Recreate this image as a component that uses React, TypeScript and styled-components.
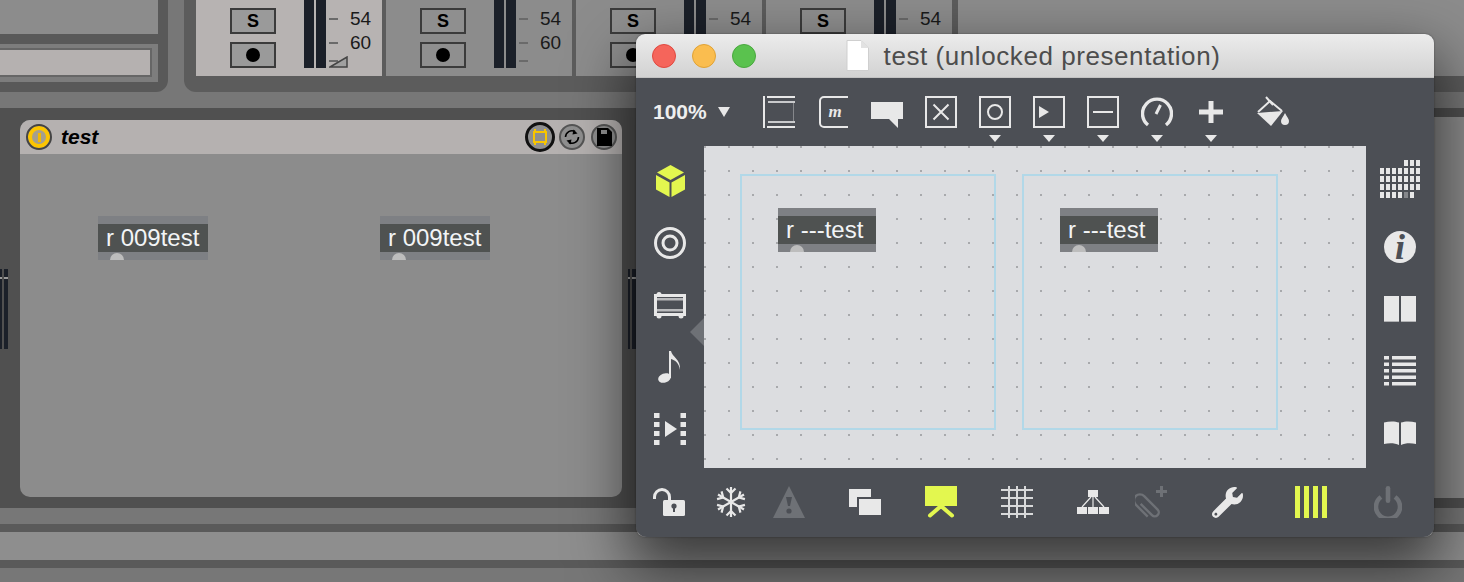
import React from "react";
import styled, { createGlobalStyle } from "styled-components";
import { FaWrench } from "react-icons/fa";

const ICON = "#e8e8e8";
const LIME = "#e3f74f";
const DIM = "#6e7176";
const CHROME = "#4c4f55";

const GlobalStyle = createGlobalStyle`
  html, body {
    margin: 0;
    padding: 0;
    background: #777;
    font-family: "Liberation Sans", Arial, sans-serif;
    overflow: hidden;
  }
`;

const Page = styled.div`
  position: relative;
  width: 1464px;
  height: 582px;
  overflow: hidden;
  background: #777;
`;

/* ---- Live set behind the patcher ---- */

const TopArea = styled.div`
  display: flex;
  height: 92px;
  margin-bottom: 16px;
`;
const BrowserPanel = styled.div`
  width: 168px;
  margin-right: 16px;
  flex: none;
  background: #595959;
  border-bottom-right-radius: 12px;
`;
const BrowserTop = styled.div`
  width: 158px;
  height: 34px;
  margin-bottom: 10px;
  background: #8c8c8c;
`;
const FieldWell = styled.div`
  width: 158px;
  height: 38px;
  box-sizing: border-box;
  padding: 4px 6px 5px 0;
  background: #7d7d7d;
`;
const Field = styled.div`
  height: 100%;
  box-sizing: border-box;
  background: #b5b1b0;
  border: 2px solid #666;
  border-left: 0;
`;
const StripPanel = styled.div`
  flex: 1;
  display: flex;
  gap: 4px;
  height: 76px;
  padding: 0 0 16px 12px;
  background: #5c5c5c;
  border-bottom-left-radius: 12px;
`;
const Strip = styled.div<{ $active?: boolean }>`
  width: 186px;
  height: 76px;
  flex: none;
  display: flex;
  background: ${(p) => (p.$active ? "#b7b3b2" : "#8c8c8c")};
`;
const StripFiller = styled.div`
  flex: 1;
  margin-left: 2px;
  background: #8c8c8c;
`;
const ButtonColumn = styled.div`
  width: 46px;
  margin: 8px 0 0 34px;
  display: flex;
  flex-direction: column;
  gap: 8px;
`;
const StripButton = styled.div<{ $active?: boolean }>`
  height: 26px;
  box-sizing: border-box;
  display: flex;
  align-items: center;
  justify-content: center;
  border: 2px solid #3b3b3b;
  background: ${(p) => (p.$active ? "#9a9a9a" : "#8f8f8f")};
  color: #000;
  font-size: 18px;
  font-weight: 700;
`;
const RecDot = styled.div`
  width: 14px;
  height: 14px;
  border-radius: 50%;
  background: #000;
`;
const StripMeter = styled.div`
  display: flex;
  gap: 2px;
  height: 68px;
  margin-left: 28px;
`;
const StripMeterBar = styled.div`
  width: 10px;
  background: #1b2029;
`;
const Scale = styled.div`
  position: relative;
  margin-left: 3px;
  padding-top: 7px;
`;
const ScaleRow = styled.div<{ $height: number }>`
  display: flex;
  align-items: center;
  height: ${(p) => p.$height}px;
`;
const Tick = styled.div`
  width: 9px;
  height: 2px;
  background: #6a6a6a;
`;
const ScaleLabel = styled.div`
  margin-left: 12px;
  font-size: 19px;
  color: #1a1a1a;
`;
const FaderMark = styled.svg`
  position: absolute;
  left: 0;
  top: 56px;
`;

const Rack = styled.div`
  display: flex;
  height: 400px;
  box-sizing: border-box;
  padding: 12px 0 11px;
  background: #505050;
`;
const Gutter = styled.div<{ $width: number; $end?: boolean }>`
  width: ${(p) => p.$width}px;
  flex: none;
  display: flex;
  align-items: center;
  justify-content: ${(p) => (p.$end ? "flex-end" : "flex-start")};
`;
const SideMeter = styled.div`
  display: flex;
  gap: 2px;
  height: 80px;
`;
const SideMeterBar = styled.div<{ $width: number }>`
  width: ${(p) => p.$width}px;
  background: linear-gradient(#1b2029 8px, #9a9a9a 8px, #9a9a9a 10px, #1b2029 10px);
`;
const Device = styled.div`
  position: relative;
  width: 602px;
  flex: none;
  display: flex;
  flex-direction: column;
  overflow: hidden;
  background: #8c8c8c;
  border-radius: 10px;
`;
const NextDevice = styled.div`
  flex: 1;
  margin: -3px 0 -1px;
  background: #8c8c8c;
`;
const DeviceHeader = styled.div`
  height: 34px;
  flex: none;
  display: flex;
  align-items: center;
  box-sizing: border-box;
  padding: 0 5px 0 6px;
  background: #b5b1b0;
`;
const DeviceName = styled.div`
  margin-left: 9px;
  flex: 1;
  font-size: 21px;
  font-weight: 700;
  font-style: italic;
  color: #000;
`;
const RoundButton = styled.div<{ $size: number; $ring: string; $gap?: number }>`
  width: ${(p) => p.$size}px;
  height: ${(p) => p.$size}px;
  margin-left: ${(p) => p.$gap ?? 0}px;
  flex: none;
  display: flex;
  align-items: center;
  justify-content: center;
  box-sizing: border-box;
  border: ${(p) => (p.$size > 28 ? 3 : 2)}px solid ${(p) => p.$ring};
  border-radius: 50%;
  background: #8f8f8f;
`;
const DevicePower = styled.div`
  width: 26px;
  height: 26px;
  flex: none;
  box-sizing: border-box;
  display: flex;
  align-items: center;
  justify-content: center;
  border: 2px solid #444;
  border-radius: 50%;
  background: #a59f8c;
  box-shadow: inset 0 0 0 4px #fcc500;
`;
const PowerBar = styled.div`
  width: 3px;
  height: 9px;
  background: #f3b900;
`;
const PatchObject = styled.div<{ $x: number; $y: number; $width: number }>`
  position: absolute;
  left: ${(p) => p.$x}px;
  top: ${(p) => p.$y}px;
  width: ${(p) => p.$width}px;
  height: 44px;
  box-sizing: border-box;
  padding-top: 8px;
  background: #7e8084;
  overflow: hidden;
`;
const PatchBody = styled.div`
  height: 28px;
  box-sizing: border-box;
  padding-left: 8px;
  background: #4f5251;
  color: #f2f4f6;
  font-size: 24px;
  line-height: 28px;
  white-space: nowrap;
`;
const Outlet = styled.div`
  position: absolute;
  left: 12px;
  top: 37px;
  width: 14px;
  height: 14px;
  border-radius: 50%;
  background: #bdbdbd;
`;

const Band = styled.div<{ $height: number; $color: string }>`
  height: ${(p) => p.$height}px;
  background: ${(p) => p.$color};
`;

/* ---- Patcher window ---- */

const PatcherWindow = styled.div`
  position: absolute;
  left: 636px;
  top: 34px;
  width: 798px;
  height: 503px;
  display: flex;
  flex-direction: column;
  overflow: hidden;
  background: ${CHROME};
  border-radius: 9px 9px 11px 11px;
`;
const WindowShadow = styled.div`
  position: absolute;
  left: 636px;
  top: 34px;
  width: 798px;
  height: 503px;
  border-radius: 9px;
  box-shadow: 0 26px 60px 6px rgba(0, 0, 0, 0.6), 0 0 2px rgba(0, 0, 0, 0.4);
`;
const TitleBar = styled.div`
  height: 44px;
  flex: none;
  display: grid;
  grid-template-columns: 1fr auto 1fr;
  align-items: center;
  box-sizing: border-box;
  padding: 0 20px 0 16px;
  background: linear-gradient(#ececec, #d2d2d2);
  border-bottom: 1px solid #c2c2c2;
`;
const Lights = styled.div`
  display: flex;
  gap: 16px;
`;
const Light = styled.div<{ $fill: string; $edge: string }>`
  width: 24px;
  height: 24px;
  box-sizing: border-box;
  border-radius: 50%;
  background: ${(p) => p.$fill};
  border: 1px solid ${(p) => p.$edge};
`;
const TitleGroup = styled.div`
  display: flex;
  align-items: center;
  gap: 15px;
`;
const TitleText = styled.div`
  padding-top: 2px;
  font-size: 26px;
  letter-spacing: 0.57px;
  color: #4d4d4d;
  white-space: nowrap;
`;
const Toolbar = styled.div`
  height: 68px;
  flex: none;
  display: flex;
  align-items: flex-start;
  box-sizing: border-box;
  padding: 18px 0 0 17px;
`;
const Zoom = styled.div`
  width: 54px;
  height: 32px;
  font-size: 21px;
  font-weight: 700;
  line-height: 32px;
  color: #eee;
  white-space: nowrap;
`;
const ZoomCaret = styled.div`
  width: 0;
  height: 0;
  margin: 11px 33px 0 11px;
  border-left: 6px solid transparent;
  border-right: 6px solid transparent;
  border-top: 10px solid ${ICON};
`;
const ToolButton = styled.div<{ $gap?: number }>`
  width: 32px;
  flex: none;
  margin-left: ${(p) => p.$gap ?? 22}px;
  display: flex;
  flex-direction: column;
  align-items: center;
`;
const ToolCaret = styled.div`
  width: 0;
  height: 0;
  margin-top: 7px;
  border-left: 6px solid transparent;
  border-right: 6px solid transparent;
  border-top: 7px solid ${ICON};
`;
const Middle = styled.div`
  position: relative;
  height: 322px;
  flex: none;
  display: flex;
`;
const SideBar = styled.div<{ $top: number }>`
  width: 68px;
  flex: none;
  display: flex;
  flex-direction: column;
  align-items: center;
  box-sizing: border-box;
  padding-top: ${(p) => p.$top}px;
`;
const SideSlot = styled.div<{ $height: number }>`
  height: ${(p) => p.$height}px;
  display: flex;
  align-items: flex-start;
  justify-content: center;
`;
const TabArrow = styled.div`
  position: absolute;
  left: 54px;
  top: 172px;
  width: 0;
  height: 0;
  border-top: 14px solid transparent;
  border-bottom: 14px solid transparent;
  border-right: 14px solid ${DIM};
`;
const Canvas = styled.div`
  position: relative;
  flex: 1;
  background-color: #dcdde0;
  background-image: radial-gradient(circle at center, #a8a9ac 0, #a8a9ac 1px, transparent 1.2px);
  background-size: 24px 24px;
  background-position: -11px -11px;
`;
const PanelFrame = styled.div<{ $x: number }>`
  position: absolute;
  left: ${(p) => p.$x}px;
  top: 28px;
  width: 256px;
  height: 256px;
  box-sizing: border-box;
  border: 2px solid #b2d8e8;
`;
const BottomBar = styled.div`
  flex: 1;
  display: flex;
  align-items: flex-start;
  box-sizing: border-box;
  padding: 18px 0 0 17px;
`;
const BottomButton = styled.div<{ $gap?: number }>`
  width: 32px;
  height: 32px;
  flex: none;
  margin-left: ${(p) => p.$gap ?? 0}px;
  display: flex;
  align-items: center;
  justify-content: center;
`;
const InfoBadge = styled.div`
  width: 32px;
  height: 32px;
  border-radius: 50%;
  background: ${ICON};
  color: ${CHROME};
  font-family: "Liberation Serif", serif;
  font-size: 36px;
  font-style: italic;
  font-weight: 700;
  line-height: 32px;
  text-align: center;
`;

/* ---- Icons ---- */

const Svg = ({ w = 32, h = 32, children }: { w?: number; h?: number; children: React.ReactNode }) => (
  <svg width={w} height={h} viewBox={`0 0 ${w} ${h}`} style={{ display: "block" }}>
    {children}
  </svg>
);

const BoxOutline = () => <rect x="1" y="1" width="30" height="30" fill="none" stroke={ICON} strokeWidth="2" />;

const FilmIcon = () => (
  <Svg>
    <rect x="0" y="0" width="2" height="32" fill={ICON} />
    <rect x="4" y="0" width="28" height="2" fill={ICON} />
    <rect x="5" y="5" width="27" height="2" fill="#c9cacc" />
    <rect x="5" y="25" width="27" height="2" fill="#c9cacc" />
    <rect x="4" y="30" width="28" height="2" fill={ICON} />
    <rect x="30" y="7" width="1" height="18" fill="#85878b" />
  </Svg>
);
const MessageIcon = () => (
  <Svg w={30}>
    <path d="M30 1H6a4 4 0 0 0-4 4V27a4 4 0 0 0 4 4H30" fill="none" stroke={ICON} strokeWidth="2" />
    <text x="17" y="21" textAnchor="middle" fontFamily="'Liberation Serif', serif" fontStyle="italic" fontWeight="700" fontSize="17" fill={ICON}>
      m
    </text>
  </Svg>
);
const CommentIcon = () => (
  <Svg>
    <path d="M0 6H32V23H27V32L18 23H0Z" fill={ICON} />
  </Svg>
);
const ToggleIcon = () => (
  <Svg>
    <BoxOutline />
    <path d="M8.5 8.5L23.5 23.5M23.5 8.5L8.5 23.5" stroke={ICON} strokeWidth="2" />
  </Svg>
);
const BangIcon = () => (
  <Svg>
    <BoxOutline />
    <circle cx="16" cy="16" r="7" fill="none" stroke={ICON} strokeWidth="2" />
  </Svg>
);
const NumberIcon = () => (
  <Svg>
    <BoxOutline />
    <path d="M6 10L16 16L6 22Z" fill={ICON} />
  </Svg>
);
const SliderIcon = () => (
  <Svg>
    <BoxOutline />
    <rect x="6" y="15" width="20" height="2" fill={ICON} />
  </Svg>
);
const DialIcon = () => (
  <Svg>
    <path d="M7 29A14.5 14.5 0 1 1 25 29" fill="none" stroke={ICON} strokeWidth="3.4" />
    <path d="M15 18L19.5 9" stroke={ICON} strokeWidth="3" />
  </Svg>
);
const PlusIcon = () => (
  <Svg>
    <path d="M13.5 5H18.5V13.5H28V18.5H18.5V27H13.5V18.5H4V13.5H13.5Z" fill={ICON} />
  </Svg>
);
const BucketIcon = () => (
  <Svg h={30}>
    <path d="M1 16L13 5L25 15" fill="none" stroke={ICON} strokeWidth="2" />
    <path d="M0 17L26 15L14 30Z" fill={ICON} />
    <path d="M9 1L16 9" stroke={ICON} strokeWidth="2" />
    <path d="M28 17C30 21 32 23 32 25A4 4 0 0 1 24 25C24 23 26 21 28 17Z" fill={ICON} />
  </Svg>
);
const CubeIcon = () => (
  <Svg w={29}>
    <path d="M14.5 0L28 7.5L14.5 15L1 7.5Z" fill={LIME} />
    <path d="M0 10L13.5 17.5V32L0 24.5Z" fill={LIME} />
    <path d="M29 10L15.5 17.5V32L29 24.5Z" fill={LIME} />
  </Svg>
);
const TargetIcon = () => (
  <Svg>
    <circle cx="16" cy="16" r="14.5" fill="none" stroke={ICON} strokeWidth="3" />
    <circle cx="16" cy="16" r="7" fill="none" stroke={ICON} strokeWidth="3" />
  </Svg>
);
const AmpIcon = () => (
  <Svg h={27}>
    <rect x="1.5" y="3.5" width="29" height="19" fill="none" stroke={ICON} strokeWidth="3" />
    <rect x="3" y="6" width="26" height="2.5" fill="#b9babc" />
    <rect x="3" y="17" width="26" height="2.5" fill="#b9babc" />
    <circle cx="5" cy="2.5" r="2.5" fill={ICON} />
    <circle cx="5" cy="24" r="2.5" fill={ICON} />
    <circle cx="27" cy="24" r="2.5" fill={ICON} />
  </Svg>
);
const NoteIcon = () => (
  <Svg w={24}>
    <ellipse cx="6.5" cy="27" rx="6.5" ry="4.6" transform="rotate(-20 6.5 27)" fill={ICON} />
    <rect x="11" y="0" width="2" height="27" fill={ICON} />
    <path d="M13 0C14 6 23 8 22 19C21 12 17 9 13 8Z" fill={ICON} />
  </Svg>
);
const TransportIcon = () => (
  <Svg>
    {[0, 9, 18, 27].map((y) => (
      <g key={y}>
        <rect x="0" y={y} width="5.5" height="5" fill={ICON} />
        <rect x="26.5" y={y} width="5.5" height="5" fill={ICON} />
      </g>
    ))}
    <path d="M11 8L23 16L11 24Z" fill={ICON} />
  </Svg>
);
const GridIcon = () => {
  const cells: React.ReactNode[] = [];
  for (let row = 0; row < 5; row++) {
    for (let col = 0; col < 7; col++) {
      if (row === 0 && col < 4) continue;
      if (row === 4 && col === 6) continue;
      const fill = row === 4 && col === 4 ? "#85878b" : ICON;
      cells.push(<rect key={`${row}-${col}`} x={col * 6} y={row * 8} width="4" height="6" fill={fill} />);
    }
  }
  return <Svg w={40} h={38}>{cells}</Svg>;
};
const BookIcon = () => (
  <Svg h={26}>
    <rect x="0" y="0" width="15" height="26" fill={ICON} />
    <rect x="17" y="0" width="15" height="26" fill={ICON} />
    <rect x="0" y="25" width="15" height="1" fill="#b0b1b3" />
    <rect x="17" y="25" width="15" height="1" fill="#b0b1b3" />
  </Svg>
);
const ListIcon = () => (
  <Svg h={30}>
    {[0, 6.5, 13, 19.5, 26].map((y) => (
      <g key={y}>
        <rect x="0" y={y} width="5" height="3.5" fill={ICON} />
        <rect x="8" y={y} width="24" height="3.5" fill={ICON} />
      </g>
    ))}
  </Svg>
);
const OpenBookIcon = () => (
  <Svg h={24}>
    <path d="M0 1.5C5 0 11 0 15 1.5V24C11 22 5 22 0 23Z" fill={ICON} />
    <path d="M32 1.5C27 0 21 0 17 1.5V24C21 22 27 22 32 23Z" fill={ICON} />
  </Svg>
);
const LockIcon = () => (
  <Svg h={28}>
    <path d="M1.5 11V9A7.5 7.5 0 0 1 16.5 9V12" fill="none" stroke={ICON} strokeWidth="3" />
    <rect x="10" y="12" width="22" height="16" rx="1.5" fill={ICON} />
    <circle cx="21" cy="18" r="2.6" fill={CHROME} />
    <rect x="20" y="18" width="2" height="6" fill={CHROME} />
  </Svg>
);
const SnowIcon = () => (
  <Svg>
    {[0, 60, 120, 180, 240, 300].map((a) => (
      <g key={a} transform={`rotate(${a} 16 16)`} stroke={ICON} strokeWidth="2.2" fill="none">
        <path d="M16 16V1" />
        <path d="M11.5 2.5L16 7L20.5 2.5" />
      </g>
    ))}
  </Svg>
);
const WarningIcon = () => (
  <Svg>
    <path d="M16 0L32 32H0Z" fill={DIM} />
    <path d="M13 11H19L17 20H15Z" fill={CHROME} />
    <circle cx="16" cy="25" r="2.6" fill={CHROME} />
  </Svg>
);
const WindowsIcon = () => (
  <Svg h={26}>
    <rect x="0" y="0" width="22" height="18" fill={ICON} />
    <rect x="8" y="8" width="24" height="18" fill={CHROME} />
    <rect x="10" y="10" width="22" height="16" fill={ICON} />
  </Svg>
);
const PresentIcon = () => (
  <Svg>
    <rect x="0" y="0" width="32" height="20" fill={LIME} />
    <path d="M5 29.5L16 20L27 29.5" fill="none" stroke={LIME} strokeWidth="4" strokeLinecap="round" />
  </Svg>
);
const PatchGridIcon = () => (
  <Svg>
    {[8, 16, 24].map((x) => (
      <rect key={x} x={x - 1} y="0" width="2" height="32" fill="#d8d9da" />
    ))}
    {[4, 12, 20, 28].map((y) => (
      <rect key={y} x="0" y={y - 1} width="32" height="2" fill="#d8d9da" />
    ))}
  </Svg>
);
const HierarchyIcon = () => (
  <Svg h={24}>
    <rect x="11" y="0" width="10" height="7" fill={ICON} />
    <rect x="0" y="17" width="10" height="7" fill={ICON} />
    <rect x="11" y="17" width="10" height="7" fill={ICON} />
    <rect x="22" y="17" width="10" height="7" fill={ICON} />
    <path d="M16 7V17M14 7L5 17M18 7L27 17" stroke={ICON} strokeWidth="1.2" fill="none" />
  </Svg>
);
const ClipIcon = () => (
  <Svg>
    <g transform="translate(12 20) rotate(-45)" fill="none" stroke={DIM} strokeWidth="2.4">
      <path d="M-3 -6V10A4 4 0 0 0 5 10V-9A6 6 0 0 0 -7 -9V8" />
    </g>
    <path d="M21 5.5H32M26.5 0V11" stroke={DIM} strokeWidth="3" />
  </Svg>
);
const BarsIcon = () => (
  <Svg>
    {[0, 9, 18, 27].map((x) => (
      <rect key={x} x={x} y="0" width="5" height="32" fill={LIME} />
    ))}
  </Svg>
);
const PowerIcon = () => (
  <Svg w={28}>
    <path d="M7 11A12 12 0 1 0 21 11" fill="none" stroke={DIM} strokeWidth="4.6" />
    <rect x="11.7" y="0" width="4.6" height="17" rx="2.3" fill={DIM} />
  </Svg>
);
const DocIcon = () => (
  <Svg w={23} h={31}>
    <path d="M1 .5H15L22.5 8V30.5H1Z" fill="#fff" stroke="#cfcfcf" />
    <path d="M15 .5V8H22.5Z" fill="#e2e2e2" />
  </Svg>
);
const PresentationSmall = () => (
  <Svg w={16} h={18}>
    <path d="M3 1V4M13 1V4M3 14V17M13 14V17" stroke="#f8c500" strokeWidth="2" />
    <rect x="2" y="4" width="12" height="10" fill="none" stroke="#f8c500" strokeWidth="2" />
  </Svg>
);
const RefreshSmall = () => (
  <Svg w={18} h={18}>
    <path d="M2.5 9A6.5 6.5 0 0 1 12 3.5M15.5 9A6.5 6.5 0 0 1 6 14.5" fill="none" stroke="#000" strokeWidth="1.6" />
    <path d="M10.5 1.5L14.5 5.5L9.5 6.5ZM7.5 16.5L3.5 12.5L8.5 11.5Z" fill="#000" />
  </Svg>
);
const SaveSmall = () => (
  <Svg w={16} h={18}>
    <path d="M1 0H12L16 4V18H1Z" fill="#000" />
    <rect x="5" y="2" width="6" height="4" fill="#8f8f8f" />
  </Svg>
);

/* ---- Data ---- */

// the "60" of the last two strips lies behind the patcher window
const strips: { active?: boolean; covered?: boolean }[] = [{ active: true }, {}, { covered: true }, { covered: true }];

const tools: { icon: React.ReactNode; caret?: boolean; gap?: number }[] = [
  { icon: <FilmIcon />, gap: 0 },
  { icon: <MessageIcon /> },
  { icon: <CommentIcon /> },
  { icon: <ToggleIcon /> },
  { icon: <BangIcon />, caret: true },
  { icon: <NumberIcon />, caret: true },
  { icon: <SliderIcon />, caret: true },
  { icon: <DialIcon />, caret: true },
  { icon: <PlusIcon />, caret: true },
  { icon: <BucketIcon />, gap: 30 },
];

const leftSide: { icon: React.ReactNode; height: number }[] = [
  { icon: <CubeIcon />, height: 62 },
  { icon: <TargetIcon />, height: 65 },
  { icon: <AmpIcon />, height: 59 },
  { icon: <NoteIcon />, height: 62 },
  { icon: <TransportIcon />, height: 32 },
];

const rightSide: { icon: React.ReactNode; height: number }[] = [
  { icon: <GridIcon />, height: 71 },
  { icon: <InfoBadge>i</InfoBadge>, height: 65 },
  { icon: <BookIcon />, height: 60 },
  { icon: <ListIcon />, height: 65 },
  { icon: <OpenBookIcon />, height: 24 },
];

const bottomTools: { icon: React.ReactNode; gap: number }[] = [
  { icon: <LockIcon />, gap: 0 },
  { icon: <SnowIcon />, gap: 30 },
  { icon: <WarningIcon />, gap: 26 },
  { icon: <WindowsIcon />, gap: 44 },
  { icon: <PresentIcon />, gap: 44 },
  { icon: <PatchGridIcon />, gap: 44 },
  { icon: <HierarchyIcon />, gap: 44 },
  { icon: <ClipIcon />, gap: 26 },
  { icon: <FaWrench size={31} color={ICON} />, gap: 44 },
  { icon: <BarsIcon />, gap: 52 },
  { icon: <PowerIcon />, gap: 45 },
];

export default function App() {
  return (
    <Page>
      <GlobalStyle />
      <TopArea>
        <BrowserPanel>
          <BrowserTop />
          <FieldWell>
            <Field />
          </FieldWell>
        </BrowserPanel>
        <StripPanel>
          {strips.map((strip, i) => (
            <Strip key={i} $active={strip.active}>
              <ButtonColumn>
                <StripButton $active={strip.active}>S</StripButton>
                <StripButton $active={strip.active}>
                  <RecDot />
                </StripButton>
              </ButtonColumn>
              <StripMeter>
                <StripMeterBar />
                <StripMeterBar />
              </StripMeter>
              <Scale>
                <ScaleRow $height={24}>
                  <Tick />
                  <ScaleLabel>54</ScaleLabel>
                </ScaleRow>
                <ScaleRow $height={24}>
                  <Tick />
                  {!strip.covered && <ScaleLabel>60</ScaleLabel>}
                </ScaleRow>
                <ScaleRow $height={12}>
                  <Tick />
                </ScaleRow>
                {strip.active && (
                  <FaderMark width="20" height="12" viewBox="0 0 20 12">
                    <path d="M1 11L18 1V11Z" fill="#a0a0a0" stroke="#444" strokeWidth="1.5" />
                  </FaderMark>
                )}
              </Scale>
            </Strip>
          ))}
          <StripFiller />
        </StripPanel>
      </TopArea>

      <Rack>
        <Gutter $width={20}>
          <SideMeter>
            <SideMeterBar $width={2} />
            <SideMeterBar $width={4} />
          </SideMeter>
        </Gutter>
        <Device>
          <DeviceHeader>
            <DevicePower>
              <PowerBar />
            </DevicePower>
            <DeviceName>test</DeviceName>
            <RoundButton $size={30} $ring="#111">
              <PresentationSmall />
            </RoundButton>
            <RoundButton $size={26} $ring="#555" $gap={4}>
              <RefreshSmall />
            </RoundButton>
            <RoundButton $size={26} $ring="#555" $gap={6}>
              <SaveSmall />
            </RoundButton>
          </DeviceHeader>
          <PatchObject $x={78} $y={96} $width={110}>
            <PatchBody>r 009test</PatchBody>
            <Outlet />
          </PatchObject>
          <PatchObject $x={360} $y={96} $width={110}>
            <PatchBody>r 009test</PatchBody>
            <Outlet />
          </PatchObject>
        </Device>
        <Gutter $width={14} $end>
          <SideMeter>
            <SideMeterBar $width={2} />
            <SideMeterBar $width={4} />
          </SideMeter>
        </Gutter>
        <NextDevice />
      </Rack>

      <Band $height={16} $color="#777" />
      <Band $height={8} $color="#5a5a5a" />
      <Band $height={28} $color="#8e8e8e" />
      <Band $height={8} $color="#5a5a5a" />
      <Band $height={14} $color="#777" />

      <WindowShadow />
      <PatcherWindow>
        <TitleBar>
          <Lights>
            <Light $fill="#f5655b" $edge="#e0483f" />
            <Light $fill="#fabd4f" $edge="#e0a235" />
            <Light $fill="#5ac24e" $edge="#49a83e" />
          </Lights>
          <TitleGroup>
            <DocIcon />
            <TitleText>test (unlocked presentation)</TitleText>
          </TitleGroup>
        </TitleBar>
        <Toolbar>
          <Zoom>100%</Zoom>
          <ZoomCaret />
          {tools.map((tool, i) => (
            <ToolButton key={i} $gap={tool.gap}>
              {tool.icon}
              {tool.caret && <ToolCaret />}
            </ToolButton>
          ))}
        </Toolbar>
        <Middle>
          <SideBar $top={19}>
            {leftSide.map((item, i) => (
              <SideSlot key={i} $height={item.height}>
                {item.icon}
              </SideSlot>
            ))}
          </SideBar>
          <TabArrow />
          <Canvas>
            <PanelFrame $x={36} />
            <PanelFrame $x={318} />
            <PatchObject $x={74} $y={62} $width={98}>
              <PatchBody>r ---test</PatchBody>
              <Outlet />
            </PatchObject>
            <PatchObject $x={356} $y={62} $width={98}>
              <PatchBody>r ---test</PatchBody>
              <Outlet />
            </PatchObject>
          </Canvas>
          <SideBar $top={14}>
            {rightSide.map((item, i) => (
              <SideSlot key={i} $height={item.height}>
                {item.icon}
              </SideSlot>
            ))}
          </SideBar>
        </Middle>
        <BottomBar>
          {bottomTools.map((tool, i) => (
            <BottomButton key={i} $gap={tool.gap}>
              {tool.icon}
            </BottomButton>
          ))}
        </BottomBar>
      </PatcherWindow>
    </Page>
  );
}
